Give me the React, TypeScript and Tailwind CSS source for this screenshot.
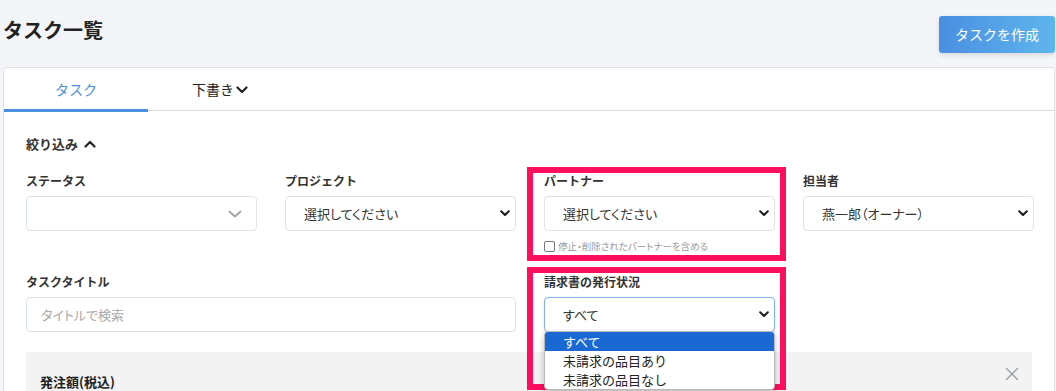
import { X } from 'lucide-react';

const jp = "font-['Noto_Sans_CJK_JP','Noto_Sans',sans-serif]";

function NativeArrow() {
  return (
    <svg viewBox="0 0 10 7" className="h-[7px] w-[10px]">
      <path d="M1.2 1.3 5 5.1 8.8 1.3" fill="none" stroke="#222" strokeWidth="2.1" strokeLinecap="round" strokeLinejoin="round" />
    </svg>
  );
}

function FieldLabel({ children }: { children: React.ReactNode }) {
  return <div className="mb-[6px] h-[18px] text-[12px] font-bold leading-[18px] text-[#333]">{children}</div>;
}

function SelectBox({ value, focused = false }: { value: string; focused?: boolean }) {
  return (
    <div
      className={`flex h-[35px] items-center justify-between rounded-[4px] border bg-white pl-[18px] pr-[5px] text-[13px] text-[#333] ${
        focused ? 'border-[#80b4ea] shadow-[0_1px_3px_rgba(0,0,0,0.12)]' : 'border-[#dde4e8]'
      }`}
    >
      <span className="[font-feature-settings:'palt']">{value}</span>
      <NativeArrow />
    </div>
  );
}

export default function App() {
  return (
    <div className={`relative h-[391px] w-[1056px] overflow-hidden bg-[#f4f5f9] text-[#333] ${jp}`}>
      <header className="flex h-[67px] items-start justify-between pl-[3px] pr-px pt-4">
        <h1 className="text-[20px] font-bold leading-[28px] text-[#222]">タスク一覧</h1>
        <button className="h-[37px] w-[116px] rounded-[3px] bg-gradient-to-r from-[#4a8fe1] to-[#5fb5ec] text-[14px] text-white shadow-[0_2px_5px_rgba(0,0,0,0.12)]">
          タスクを作成
        </button>
      </header>

      <div className="ml-[3px] mr-px h-[330px] rounded-t-[4px] border border-[#dfe1e4] bg-white">
        <div className="flex h-[43px] border-b border-[#dcdcdc]">
          <div className="-mb-px flex h-[44px] w-[144px] items-center justify-center border-b-[3px] border-[#4a8fe1] pt-[1px] text-[14px] text-[#4a8fe1]">
            タスク
          </div>
          <div className="flex w-[144px] items-center justify-center gap-[2px] pt-[1px] text-[14px] text-[#222]">
            下書き
            <svg viewBox="0 0 12 8" className="h-[8px] w-[12px]">
              <path d="M1.5 1.5 6 6l4.5-4.5" fill="none" stroke="#222" strokeWidth="2.2" strokeLinecap="round" strokeLinejoin="round" />
            </svg>
          </div>
        </div>

        <div className="pl-[22px] pt-[22px]">
          <div className="flex h-[21px] items-center gap-[6px] text-[13px] font-bold leading-[21px] text-[#333]">
            絞り込み
            <svg viewBox="0 0 12 8" className="h-[8px] w-[12px]">
              <path d="M1.5 6.5 6 2l4.5 4.5" fill="none" stroke="#222" strokeWidth="2.2" strokeLinecap="round" strokeLinejoin="round" />
            </svg>
          </div>

          <div className="mt-[18px] grid grid-cols-[231px_231px_231px_231px] items-start gap-x-[28px] gap-y-[21px]">
            <div>
              <FieldLabel>ステータス</FieldLabel>
              <div className="flex h-[35px] items-center justify-end rounded-[4px] border border-[#dde4e8] bg-white pr-[14px]">
                <svg viewBox="0 0 14 8" className="h-[8px] w-[14px]">
                  <path d="M1.5 1.5 7 6.5l5.5-5" fill="none" stroke="#a0a4a8" strokeWidth="1.8" strokeLinecap="round" strokeLinejoin="round" />
                </svg>
              </div>
            </div>
            <div>
              <FieldLabel>プロジェクト</FieldLabel>
              <SelectBox value="選択してください" />
            </div>
            <div>
              <FieldLabel>パートナー</FieldLabel>
              <SelectBox value="選択してください" />
              <label className="mt-[9px] flex h-[12px] items-center gap-[3px] text-[9.5px] leading-[12px] text-[#9a9a9a]">
                <span className="h-[11px] w-[11px] rounded-[2px] border border-[#777] bg-white" />
                <span className="[font-feature-settings:'palt']">停止・削除されたパートナーを含める</span>
              </label>
            </div>
            <div>
              <FieldLabel>担当者</FieldLabel>
              <SelectBox value="燕一郎（オーナー）" />
            </div>

            <div className="col-span-2">
              <FieldLabel>タスクタイトル</FieldLabel>
              <div className="flex h-[35px] items-center rounded-[4px] border border-[#dde4e8] bg-white pl-[14px] text-[13px] text-[#a9a9a9]">
                <span className="[font-feature-settings:'palt']">タイトルで検索</span>
              </div>
            </div>
            <div className="relative z-10">
              <FieldLabel>請求書の発行状況</FieldLabel>
              <SelectBox value="すべて" focused />
              <ul className="absolute left-0 top-full -mt-px w-full overflow-hidden rounded-[4px] border border-[#b9b9b9] bg-white text-[13px] leading-[19px] text-[#222] shadow-[0_3px_6px_rgba(0,0,0,0.25)]">
                <li className="bg-[#1a68d3] pl-[18px] text-white">すべて</li>
                <li className="pl-[18px]">未請求の品目あり</li>
                <li className="pl-[18px]">未請求の品目なし</li>
              </ul>
            </div>
          </div>

          <div className="relative mt-[20px] h-[60px] w-[1006px] bg-[#f3f3f3] pl-[14px] pt-[21px]">
            <div className="text-[13px] font-bold leading-[18px] text-[#222]">発注額(税込)</div>
            <X className="absolute right-[9px] top-[11px] h-[22px] w-[22px] text-[#9aa3ab]" strokeWidth={1.6} />
          </div>
        </div>
      </div>

      <div className="pointer-events-none absolute left-[527px] top-[167px] h-[94px] w-[259px] border-[6px] border-[#fd0f5e]" />
      <div className="pointer-events-none absolute left-[527px] top-[267px] h-[123px] w-[259px] border-[6px] border-[#fd0f5e]" />
    </div>
  );
}
